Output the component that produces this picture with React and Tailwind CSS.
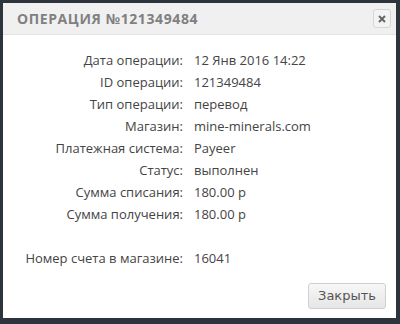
export default function App() {
  const rows = [
    ["Дата операции:", "12 Янв 2016 14:22"],
    ["ID операции:", "121349484"],
    ["Тип операции:", "перевод"],
    ["Магазин:", "mine-minerals.com"],
    ["Платежная система:", "Payeer"],
    ["Статус:", "выполнен"],
    ["Сумма списания:", "180.00 р"],
    ["Сумма получения:", "180.00 р"],
    ["", ""],
    ["Номер счета в магазине:", "16041"],
  ];

  return (
    <div className="w-[400px] h-[324px] bg-[#2d343c] pt-[3px] pl-[3px]">
      <div className="w-[393px] h-[315px] bg-white flex flex-col font-['Open_Sans',sans-serif]">
        {/* Header */}
        <div className="h-[32px] bg-[#f0f0f0] border-b border-[#e2e2e2] flex items-center justify-between pl-[14px] pr-[5px]">
          <span className="text-[14px] font-bold tracking-[0.6px] text-[#808080]">ОПЕРАЦИЯ №121349484</span>
          <button className="w-[18px] h-[19px] rounded-[3px] border border-[#d6d6d6] bg-[#f3f3f3] flex items-center justify-center">
            <svg width="8" height="8" viewBox="0 0 8 8">
              <path d="M1 1L7 7M7 1L1 7" stroke="#666" strokeWidth="2" />
            </svg>
          </button>
        </div>

        {/* Details */}
        <div className="pt-[14px] grid grid-cols-[180px_1fr] gap-x-[11px] text-[13px] text-[#444] leading-[22px]">
          {rows.map(([label, value], i) => (
            <div key={i} className="contents">
              <div className="text-right h-[22px]">{label}</div>
              <div className="h-[22px]">{value}</div>
            </div>
          ))}
        </div>

        {/* Footer */}
        <div className="mt-auto flex justify-end pr-[10px] pb-[9px]">
          <button className="w-[78px] h-[26px] rounded-[3px] border border-[#d0d0d0] bg-gradient-to-b from-[#f7f7f7] to-[#e6e6e6] text-[13px] text-[#555] font-['DejaVu_Sans',sans-serif]">
            Закрыть
          </button>
        </div>
      </div>
    </div>
  );
}
